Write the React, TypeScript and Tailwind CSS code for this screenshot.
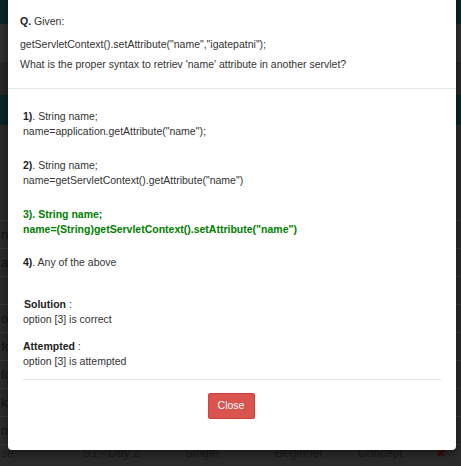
export default function App() {
  const options = [
    { no: '1)', line1: 'String name;', line2: 'name=application.getAttribute("name");' },
    { no: '2)', line1: 'String name;', line2: 'name=getServletContext().getAttribute("name")' },
    { no: '3)', line1: 'String name;', line2: 'name=(String)getServletContext().setAttribute("name")', correct: true },
    { no: '4)', line1: 'Any of the above' },
  ];

  const rowText = ['n', 'ati', '', 'on', 'fo', 'fo', 'k', 'm'];

  return (
    <div className="relative h-[466px] w-[461px] overflow-hidden bg-[#2b2b2b] font-['Liberation_Sans',Arial,sans-serif] text-[10.5px] text-[#333]">
      {/* Dimmed page behind the modal */}
      <div className="flex flex-col">
        <div className="h-[24px] bg-[#0b2627]" />
        <div className="h-[38px] bg-[#303030]" />
        <div className="h-[33px] bg-[#292929]" />
        <div className="h-[30px] bg-[#0b2627]" />
        <div className="h-[95px] bg-[#2b2b2b]" />
        {rowText.map((t, i) => (
          <div key={i} className="flex h-[28px] items-center border-t border-[#383838] pl-[1px] text-[13px] text-[#141414]">
            {t}
          </div>
        ))}
        <div className="flex h-[24px] items-start border-t border-[#383838] pt-[1px] text-[12px] leading-[14px] text-[#1a1a1a]">
          <span className="w-[83px] pl-[1px]">se</span>
          <span className="w-[102px]">S1 - Day 2</span>
          <span className="w-[90px]">Single</span>
          <span className="w-[83px]">Beginner</span>
          <span className="w-[78px]">Concept</span>
          <span className="text-[#3a0c0c]">✖</span>
        </div>
      </div>

      {/* Modal */}
      <div className="absolute left-[8px] top-[-6px] flex h-[456px] w-[448px] flex-col rounded-[4px] bg-white shadow-[0_3px_9px_rgba(0,0,0,0.5)]">
        {/* Header */}
        <div className="border-b border-[#e5e5e5] px-[12px] pt-[20px] pb-[16px] leading-[15px]">
          <p>
            <b className="text-[#222]">Q.</b> Given:
          </p>
          <p className="mt-[7.5px]">getServletContext().setAttribute("name","igatepatni");</p>
          <p className="mt-[5px]">What is the proper syntax to retriev 'name' attribute in another servlet?</p>
        </div>

        {/* Body */}
        <div className="flex flex-col px-[15px] pt-[20px] leading-[15px]">
          {options.map((o) => (
            <div
              key={o.no}
              className={o.correct ? 'mb-[18px] font-bold text-[#008000]' : 'mb-[19px]'}
            >
              <div>
                <b className={o.correct ? '' : 'text-[#222]'}>{o.no}</b>.{' '}
                {o.line1}
              </div>
              {o.line2 && <div>{o.line2}</div>}
            </div>
          ))}

          <div className="mt-[8px]">
            <div className="pl-[1px]">
              <b className="text-[#222]">Solution</b> :
            </div>
            <div>option [3] is correct</div>
          </div>
          <div className="mt-[12px]">
            <div>
              <b className="text-[#222]">Attempted</b> :
            </div>
            <div>option [3] is attempted</div>
          </div>

          <div className="mt-[10px] w-[418px] border-t border-[#e5e5e5]" />

          <div className="mt-[13px] flex justify-center pr-[2px]">
            <button className="h-[26px] w-[47px] rounded-[2px] border border-[#d43f3a] bg-[#d9534f] text-[10.5px] text-white">
              Close
            </button>
          </div>
        </div>
      </div>
    </div>
  );
}
